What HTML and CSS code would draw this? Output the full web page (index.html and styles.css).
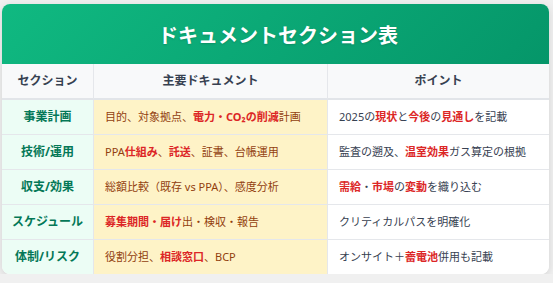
FILE: index.html
```html
<!DOCTYPE html>
<html lang="ja">
<head>
<meta charset="utf-8">
<title>ドキュメントセクション表</title>
<link rel="stylesheet" href="styles.css">
</head>
<body>
<div class="card">
  <div class="title">ドキュメントセクション表</div>
  <div class="grid">
    <div class="th">セクション</div>
    <div class="th">主要ドキュメント</div>
    <div class="th">ポイント</div>

    <div class="sec">事業計画</div>
    <div class="doc">目的、対象拠点、<b>電力・CO₂の削減</b>計画</div>
    <div class="pt">2025の<b>現状</b>と<b>今後</b>の<b>見通し</b>を記載</div>

    <div class="sec">技術/運用</div>
    <div class="doc">PPA<b>仕組み</b>、<b>託送</b>、証書、台帳運用</div>
    <div class="pt">監査の遡及、<b>温室効果</b>ガス算定の根拠</div>

    <div class="sec">収支/効果</div>
    <div class="doc">総額比較（既存 vs PPA）、感度分析</div>
    <div class="pt"><b>需給</b>・<b>市場</b>の<b>変動</b>を織り込む</div>

    <div class="sec">スケジュール</div>
    <div class="doc"><b>募集期間・届け</b>出・検収・報告</div>
    <div class="pt">クリティカルパスを明確化</div>

    <div class="sec last">体制/リスク</div>
    <div class="doc last">役割分担、<b>相談窓口</b>、BCP</div>
    <div class="pt last">オンサイト＋<b>蓄電池</b>併用も記載</div>
  </div>
</div>
</body>
</html>
```

FILE: styles.css
```css
* { box-sizing: border-box; }
html, body { margin: 0; padding: 0; }
body {
  background: #f0f0f0;
  font-family: "Noto Sans", "Noto Sans CJK JP", sans-serif;
  padding: 4px 4px 0 2px;
}
.card {
  width: 547px;
  background: #ffffff;
  border-radius: 8px;
  overflow: hidden;
  box-shadow: 0 2px 8px rgba(0, 0, 0, 0.12);
}
.title {
  height: 60px;
  display: flex;
  align-items: center;
  justify-content: center;
  background: linear-gradient(135deg, #10b981 0%, #059669 100%);
  color: #ffffff;
  font-size: 20px;
  font-weight: 700;
  text-shadow: 0 1px 2px rgba(0, 0, 0, 0.15);
  padding-left: 5px;
}
.grid {
  display: grid;
  grid-template-columns: 92px 234px 1fr;
}
.grid > div {
  display: flex;
  align-items: center;
  height: 35px;
  border-bottom: 1px solid #e5e7eb;
  border-right: 1px solid #e5e7eb;
  font-size: 11px;
  line-height: 16px;
  white-space: nowrap;
}
.grid > div:nth-child(3n) { border-right: none; }
.grid > .th {
  height: 36px;
  background: #f8f9fa;
  border-bottom: 2px solid #e2e5e9;
  justify-content: center;
  font-size: 12px;
  font-weight: 700;
  color: #374151;
}
.sec {
  background: #ecfdf5;
  justify-content: center;
  font-size: 12px !important;
  font-weight: 700;
  color: #047857;
}
.doc {
  background: #fef3c7;
  color: #92400e;
  padding-left: 11px;
}
.pt {
  background: #ffffff;
  color: #374151;
  padding-left: 11px;
}
.grid > .last { border-bottom: none; height: 34px; }
b { color: #dc2626; font-weight: 700; }
```
